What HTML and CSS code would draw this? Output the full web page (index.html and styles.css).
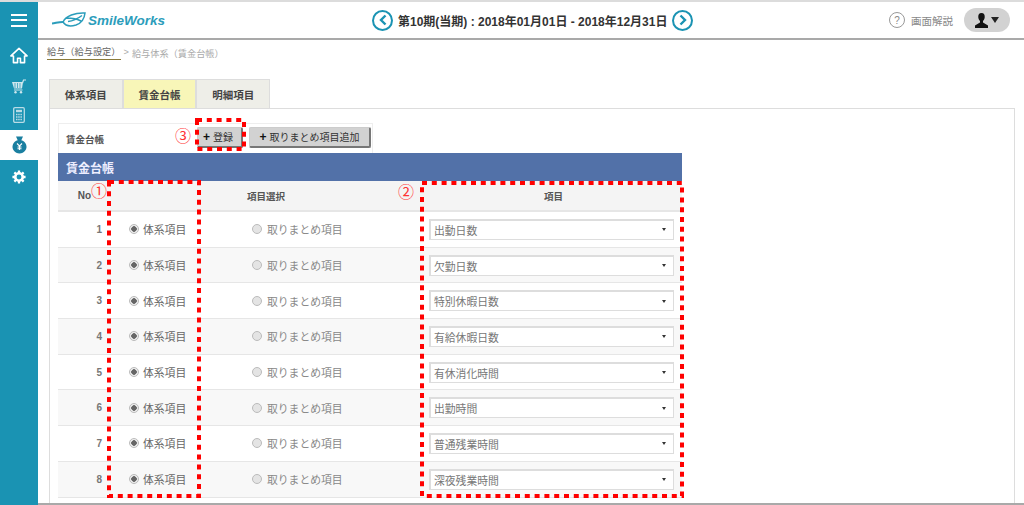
FILE: index.html
```html
<!DOCTYPE html>
<html lang="ja">
<head>
<meta charset="utf-8">
<title>賃金台帳</title>
<link rel="stylesheet" href="styles.css">
</head>
<body>
<div class="app">
  <aside class="side">
    <div class="side-item burger"><span></span><span></span><span></span></div>
    <div class="side-item home">
      <svg width="18" height="17" viewBox="0 0 20 19"><path d="M10 1.500 1 10h2.800v7.500h4.600v-5h3.200v5h4.600V10H19z" fill="none" stroke="#fff" stroke-width="1.800" stroke-linejoin="round"/></svg>
    </div>
    <div class="side-item cart">
      <svg width="14" height="15" viewBox="0 0 14 15"><path d="M0 3h11l-1 6.500H2z" fill="#cfe7ee"/><path d="M3 4v5M5.500 4v5M8 4v5" stroke="#1a93b3" stroke-width=".7"/><path d="M10.500 4 11.500 1H14M2 11h8.500" fill="none" stroke="#cfe7ee" stroke-width="1.200"/><circle cx="3.500" cy="13.300" r="1.200" fill="#cfe7ee"/><circle cx="9" cy="13.300" r="1.200" fill="#cfe7ee"/></svg>
    </div>
    <div class="side-item calc">
      <svg width="12" height="16" viewBox="0 0 12 16"><rect x=".7" y=".7" width="10.600" height="14.600" rx="1.200" fill="none" stroke="#b9dce6" stroke-width="1.300"/><rect x="3" y="2.800" width="6" height="2.400" fill="#b9dce6"/><path d="M3 7.500h6M3 10h6M3 12.500h6" stroke="#b9dce6" stroke-width="1.300" stroke-dasharray="1.500 .7"/></svg>
    </div>
    <div class="side-item active">
      <svg width="15" height="18" viewBox="0 0 15 18"><path d="M4 .5h7L9.300 4.300a7 6.700 0 1 1-3.600 0z" fill="#1a7fa0"/><path d="M5 7.500 7.500 10 10 7.500M7.500 10v4M5.500 11h4M5.500 12.800h4" stroke="#fff" stroke-width="1.100" fill="none"/></svg>
    </div>
    <div class="side-item gear">
      <svg width="14" height="14" viewBox="0 0 16 16"><circle cx="8" cy="8" r="4.300" fill="none" stroke="#fff" stroke-width="3"/><path d="M8 .5v3M8 12.500v3M.5 8h3M12.500 8h3M2.700 2.700l2.100 2.100M11.200 11.200l2.100 2.100M13.300 2.700l-2.100 2.100M4.800 11.200l-2.100 2.100" stroke="#fff" stroke-width="2.600"/></svg>
    </div>
  </aside>
  <div class="main">
    <header class="top">
      <div class="logo">
        <svg width="35" height="18" viewBox="0 0 35 18"><path d="M11 11C14 5 23 1.500 33 2c-.5 5-3 10-9 12-5 1.500-10.500 1-13-3zM16 10.500c5-.5 10-3 14-6M14 7c5 0 10 0 15 3" fill="none" stroke="#2b9dbb" stroke-width="1.500"/><path d="M0 12.500c4-.5 8-2 12-1.500" fill="none" stroke="#2b9dbb" stroke-width="2"/></svg>
        <span class="logo-text">SmileWorks</span>
      </div>
      <div class="period">
        <span class="round-btn">
          <svg width="10" height="12" viewBox="0 0 10 12"><path d="M7.500 1.500 3 6l4.500 4.500" fill="none" stroke="#1a93b3" stroke-width="2.400"/></svg>
        </span>
        <span class="period-text">第10期(当期) : 2018年01月01日 - 2018年12月31日</span>
        <span class="round-btn">
          <svg width="10" height="12" viewBox="0 0 10 12"><path d="M2.500 1.500 7 6l-4.500 4.500" fill="none" stroke="#1a93b3" stroke-width="2.400"/></svg>
        </span>
      </div>
      <div class="top-right">
        <span class="help-icon">?</span>
        <span class="help-text">画面解説</span>
        <span class="user">
          <svg width="13" height="15" viewBox="0 0 13 15"><path d="M6.500 0C4 0 3 2 3.300 4.500c.2 1.500.8 2.800 1.700 3.500v1.500L0 12.500V15h13v-2.500L8 9.500V8c.9-.7 1.500-2 1.700-3.500C10 2 9 0 6.500 0z" fill="#111"/></svg>
          <i class="user-caret"></i>
        </span>
      </div>
    </header>
    <nav class="crumbs"><a class="crumb-link">給与（給与設定）</a><span class="crumb-sep">&gt;</span><span>給与体系（賃金台帳）</span></nav>
    <div class="tabs">
      <div class="tab">体系項目</div>
      <div class="tab current">賃金台帳</div>
      <div class="tab">明細項目</div>
    </div>
    <section class="panel">
      <div class="toolbar">
        <span class="toolbar-title">賃金台帳</span>
        <button class="btn reg"><b>+</b> 登録</button>
        <button class="btn add"><b>+</b> 取りまとめ項目追加</button>
      </div>
      <div class="band">賃金台帳</div>
      <div class="grid">
        <div class="row head">
          <div class="c-no">No</div>
          <div class="c-sel">項目選択</div>
          <div class="c-item">項目</div>
        </div>
        <div class="row">
          <div class="c-no">1</div>
          <div class="c-a"><i class="radio on"></i>体系項目</div>
          <div class="c-b"><i class="radio"></i>取りまとめ項目</div>
          <div class="c-item"><div class="select">出動日数<i class="caret"></i></div></div>
        </div>
        <div class="row">
          <div class="c-no">2</div>
          <div class="c-a"><i class="radio on"></i>体系項目</div>
          <div class="c-b"><i class="radio"></i>取りまとめ項目</div>
          <div class="c-item"><div class="select">欠勤日数<i class="caret"></i></div></div>
        </div>
        <div class="row">
          <div class="c-no">3</div>
          <div class="c-a"><i class="radio on"></i>体系項目</div>
          <div class="c-b"><i class="radio"></i>取りまとめ項目</div>
          <div class="c-item"><div class="select">特別休暇日数<i class="caret"></i></div></div>
        </div>
        <div class="row">
          <div class="c-no">4</div>
          <div class="c-a"><i class="radio on"></i>体系項目</div>
          <div class="c-b"><i class="radio"></i>取りまとめ項目</div>
          <div class="c-item"><div class="select">有給休暇日数<i class="caret"></i></div></div>
        </div>
        <div class="row">
          <div class="c-no">5</div>
          <div class="c-a"><i class="radio on"></i>体系項目</div>
          <div class="c-b"><i class="radio"></i>取りまとめ項目</div>
          <div class="c-item"><div class="select">有休消化時間<i class="caret"></i></div></div>
        </div>
        <div class="row">
          <div class="c-no">6</div>
          <div class="c-a"><i class="radio on"></i>体系項目</div>
          <div class="c-b"><i class="radio"></i>取りまとめ項目</div>
          <div class="c-item"><div class="select">出勤時間<i class="caret"></i></div></div>
        </div>
        <div class="row">
          <div class="c-no">7</div>
          <div class="c-a"><i class="radio on"></i>体系項目</div>
          <div class="c-b"><i class="radio"></i>取りまとめ項目</div>
          <div class="c-item"><div class="select">普通残業時間<i class="caret"></i></div></div>
        </div>
        <div class="row">
          <div class="c-no">8</div>
          <div class="c-a"><i class="radio on"></i>体系項目</div>
          <div class="c-b"><i class="radio"></i>取りまとめ項目</div>
          <div class="c-item"><div class="select">深夜残業時間<i class="caret"></i></div></div>
        </div>
      </div>
    </section>
  </div>
</div>
<svg class="marks" width="1024" height="505" viewBox="0 0 1024 505">
  <g fill="none" stroke="#f00" stroke-width="4" stroke-dasharray="5 4.800">
    <rect x="109" y="182" width="90" height="314"/>
    <rect x="422" y="183" width="260" height="313"/>
    <rect x="197" y="120" width="47" height="29"/>
  </g>
</svg>
<span class="num n1">①</span>
<span class="num n2">②</span>
<span class="num n3">③</span>
<div class="page-foot"></div>
</body>
</html>
```
FILE: styles.css
```css
* { box-sizing: border-box; }
html, body { margin: 0; height: 505px; overflow: hidden; background: #fff; }
body {
  position: relative;
  font-family: "Liberation Sans", "Noto Sans CJK JP", sans-serif;
  font-size: 11px;
  color: #555;
  border-top: 2px solid #dcdcdc;
}
.app { display: flex; height: 503px; }
.side { width: 38px; flex: none; background: #1a93b3; display: flex; flex-direction: column; }
.side-item { display: flex; align-items: center; justify-content: center; flex: none; }
.side-item.burger { height: 36px; flex-direction: column; gap: 3.500px; }
.burger span { display: block; width: 16px; height: 2px; background: #fff; }
.side-item.home { height: 34px; }
.side-item.cart { height: 28px; }
.side-item.calc { height: 30px; }
.side-item.active { background: #fff; height: 30px; }
.side-item.gear { height: 34px; }
.main { flex: 1; min-width: 0; display: flex; flex-direction: column; }
.top { height: 38px; flex: none; border-bottom: 2px solid #a9a9a9; display: flex; align-items: center; padding-left: 14px; }
.logo { display: flex; align-items: center; gap: 1px; width: 320px; flex: none; }
.logo-text { font-size: 13.500px; font-weight: bold; font-style: italic; color: #2b9dbb; white-space: nowrap; }
.period { display: flex; align-items: center; gap: 5px; flex: none; }
.round-btn { width: 21px; height: 21px; border: 2px solid #1a93b3; border-radius: 50%; display: flex; align-items: center; justify-content: center; flex: none; }
.period-text { font-size: 12px; font-weight: bold; color: #333; white-space: nowrap; }
.top-right { margin-left: auto; display: flex; align-items: center; padding-right: 14px; }
.help-icon { width: 16px; height: 16px; border: 1px solid #999; border-radius: 50%; color: #888; font-size: 10px; display: flex; align-items: center; justify-content: center; }
.help-text { margin: 0 11px 0 6px; color: #888; font-size: 10.500px; }
.user { width: 46px; height: 24px; background: #d2d2d2; border-radius: 12px; display: flex; align-items: center; justify-content: center; gap: 3px; }
.user-caret { border: 4px solid transparent; border-top: 6px solid #222; border-bottom: 0; }
.crumbs { height: 39px; flex: none; padding: 6px 0 0 9px; font-size: 9.200px; color: #aaa; display: flex; align-items: flex-start; }
.crumb-link { color: #666; border-bottom: 1px solid #8a7a3a; line-height: 13px; height: 14px; }
.crumb-sep { margin: 1px 3px 0 3px; }
.tabs { display: flex; flex: none; margin-left: 11px; height: 29px; }
.tab { width: 73.700px; height: 29px; background: #eeeee8; border: 1px solid #ddd; border-bottom: 0; display: flex; align-items: center; justify-content: center; font-weight: bold; font-size: 10.500px; color: #444; }
.tab.current { background: #f8f6b8; }
.panel { margin: 0 9px 0 11px; flex: 1; min-height: 0; border: 1px solid #ddd; border-bottom: 0; padding: 14px 0 0 8px; }
.toolbar { width: 315px; height: 30px; border: 1px solid #eee; border-bottom: 0; display: flex; align-items: center; padding-left: 7px; }
.toolbar-title { width: 131px; flex: none; font-weight: bold; font-size: 9.500px; color: #555; }
.btn { height: 21px; margin-bottom: 3px; border: 1px solid #ccc; border-right: 2px solid #777; border-bottom: 2px solid #777; background: #d2d2d2; border-radius: 2px; padding: 0; font: inherit; font-size: 10px; color: #333; white-space: nowrap; flex: none; }
.btn.reg { width: 46px; margin-right: 6px; padding-right: 3px; }
.btn.add { width: 122px; }
.btn b { font-size: 12px; color: #111; }
.band { width: 624px; height: 28px; background: #5271a8; color: #eef; font-weight: bold; font-size: 12px; display: flex; align-items: center; padding-left: 8px; }
.grid { width: 624px; }
.row { display: flex; height: 35.700px; border-bottom: 1px solid #e6e6e6; align-items: center; font-size: 10.800px; }
.row:nth-child(even) { background: #fff; }
.row:nth-child(odd) { background: #f8f8f8; }
.row.head { height: 31px; background: #f4f4f4; font-weight: bold; font-size: 9.500px; border-bottom: 2px solid #e6e6e6; }
.c-no { width: 44px; text-align: right; flex: none; font-size: 10px; font-weight: bold; color: #777; }
.head .c-no { width: 33px; color: #555; }
.c-sel { width: 350px; text-align: center; flex: none; }
.c-a { width: 123px; flex: none; padding-left: 27px; display: flex; align-items: center; color: #666; }
.c-b { width: 204px; flex: none; padding-left: 27px; display: flex; align-items: center; color: #888; }
.c-b .radio { margin-right: 5px; }
.c-item { flex: 1; min-width: 0; text-align: center; }
.head .c-item { padding-right: 16px; }
.row:not(.head) .c-item { padding-right: 8px; }
.radio { width: 10px; height: 10px; border-radius: 50%; border: 1px solid #bbb; background: #e4e4e4; margin-right: 4px; flex: none; }
.radio.on { background: radial-gradient(circle, #666 0 2.500px, #eee 3px); }
.select { height: 21px; background: #fff; border: 1px solid #ddd; border-width: 2px 1px 1px 2px; padding-left: 3px; text-align: left; display: flex; align-items: center; justify-content: space-between; color: #777; font-size: 10.800px; }
.caret { border: 2.500px solid transparent; border-top: 3px solid #333; border-bottom: 0; margin-right: 7px; }
.marks { position: absolute; left: 0; top: -2px; pointer-events: none; }
.num { position: absolute; color: #f33; font-size: 16px; line-height: 16px; font-family: "Noto Sans CJK JP", sans-serif; }
.n1 { left: 91px; top: 180px; }
.n2 { left: 398px; top: 181px; }
.n3 { left: 175px; top: 125px; }
.page-foot { position: absolute; left: 38px; right: 0; top: 501px; height: 2px; background: #a9a9a9; }
```
